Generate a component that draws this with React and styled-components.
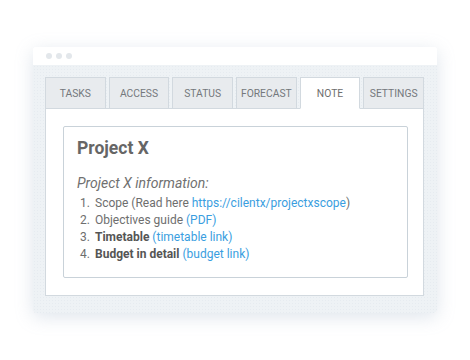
import styled, { createGlobalStyle } from 'styled-components';

const Global = createGlobalStyle`
  body {
    margin: 0;
    background: #ffffff;
    font-family: Roboto, "Liberation Sans", sans-serif;
  }
`;

const Page = styled.div`
  width: 470px;
  height: 360px;
  padding: 47px 0 0 33px;
  box-sizing: border-box;
`;

const Window = styled.div`
  width: 404px;
  height: 266px;
  display: flex;
  flex-direction: column;
  background: #ffffff;
  border-radius: 3px;
  box-shadow: 0 4px 18px rgba(140, 160, 185, 0.28);
  overflow: hidden;
`;

const TitleBar = styled.div`
  height: 18px;
  display: flex;
  align-items: center;
  gap: 4px;
  padding-left: 13px;
  background: #ffffff;
`;

const Dot = styled.span`
  width: 6px;
  height: 6px;
  border-radius: 50%;
  background: #e3e7eb;
`;

const Body = styled.div`
  flex: 1;
  padding: 12px 13px 17px 12px;
  display: flex;
  flex-direction: column;
  background-color: #eef2f5;
  background-image: radial-gradient(#e6ebf0 0.6px, transparent 0.8px);
  background-size: 3px 3px;
`;

const Tabs = styled.div`
  display: grid;
  grid-template-columns: repeat(6, 1fr);
  gap: 3px;
  height: 31px;
`;

const Tab = styled.div`
  display: flex;
  align-items: center;
  justify-content: center;
  font-size: 10.3px;
  color: ${p => (p.$active ? '#6e6e6e' : '#74787c')};
  background: ${p => (p.$active ? '#ffffff' : '#e8ebee')};
  border: 1px solid #d2d9df;
  border-bottom: ${p => (p.$active ? '1px solid #ffffff' : '1px solid #d2d9df')};
  margin-bottom: -1px;
  position: relative;
  z-index: 1;
`;

const Panel = styled.div`
  flex: 1;
  background: #ffffff;
  border: 1px solid #d2d9df;
  padding: 17px 15px 17px 17px;
  display: flex;
`;

const Card = styled.div`
  flex: 1;
  border: 1px solid #c9d2d9;
  border-radius: 2px;
  padding: 10px 13px;
  color: #6e6e6e;
`;

const Title = styled.h1`
  margin: 0 0 14px;
  font-size: 17.5px;
  line-height: 22px;
  font-weight: 700;
  color: #666;
`;

const Lead = styled.div`
  font-size: 14px;
  line-height: 20px;
  font-style: italic;
  color: #707070;
  margin-bottom: 2px;
`;

const List = styled.ol`
  margin: 0;
  padding: 0;
  list-style: none;
`;

const Item = styled.li`
  display: flex;
  font-size: 12px;
  line-height: 17px;
  color: #6e6e6e;
`;

const Num = styled.span`
  width: 15px;
  padding-left: 3px;
  flex: none;
`;

const Strong = styled.b`
  color: #555;
  font-weight: 700;
`;

const Link = styled.a`
  color: #3a9ee0;
  text-decoration: none;
  white-space: pre;
`;

const tabs = ['TASKS', 'ACCESS', 'STATUS', 'FORECAST', 'NOTE', 'SETTINGS'];

export default function App() {
  return (
    <Page>
      <Global />
      <Window>
        <TitleBar>
          <Dot />
          <Dot />
          <Dot />
        </TitleBar>
        <Body>
          <Tabs>
            {tabs.map(t => (
              <Tab key={t} $active={t === 'NOTE'}>
                {t}
              </Tab>
            ))}
          </Tabs>
          <Panel>
            <Card>
              <Title>Project X</Title>
              <Lead>Project X information:</Lead>
              <List>
                <Item>
                  <Num>1.</Num>
                  <span>
                    Scope (Read here <Link>https://cilentx/projectxscope</Link>)
                  </span>
                </Item>
                <Item>
                  <Num>2.</Num>
                  <span>
                    Objectives guide <Link>(PDF)</Link>
                  </span>
                </Item>
                <Item>
                  <Num>3.</Num>
                  <span>
                    <Strong>Timetable</Strong> <Link>(timetable link)</Link>
                  </span>
                </Item>
                <Item>
                  <Num>4.</Num>
                  <span>
                    <Strong>Budget in detail</Strong> <Link>(budget link)</Link>
                  </span>
                </Item>
              </List>
            </Card>
          </Panel>
        </Body>
      </Window>
    </Page>
  );
}
